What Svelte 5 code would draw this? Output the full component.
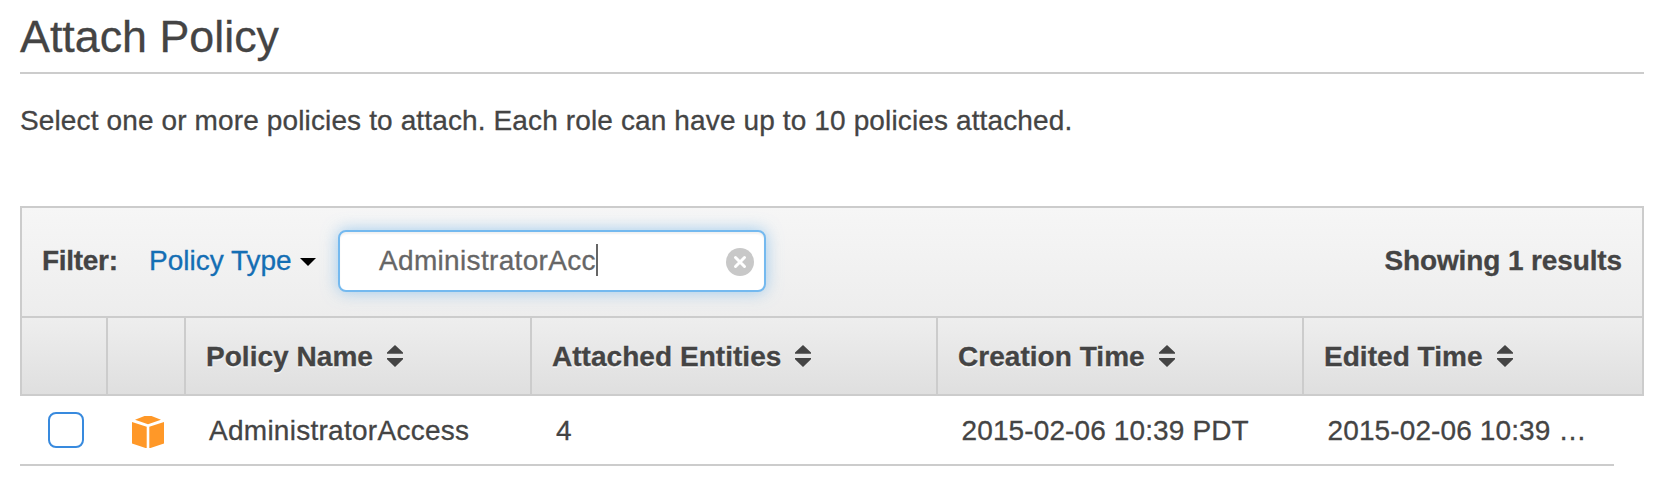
<script>
  const columns = [
    { label: 'Policy Name' },
    { label: 'Attached Entities' },
    { label: 'Creation Time' },
    { label: 'Edited Time' }
  ];
  const policies = [
    { name: 'AdministratorAccess', attached: 4, created: '2015-02-06 10:39 PDT', edited: '2015-02-06 10:39 PDT' }
  ];
  const query = 'AdministratorAcc';
</script>

<main>
  <h1>Attach Policy</h1>
  <p class="intro">Select one or more policies to attach. Each role can have up to 10 policies attached.</p>

  <section class="panel">
    <div class="toolbar">
      <strong class="filter">Filter:</strong>
      <span class="type">Policy Type</span>
      <svg class="caret" width="16" height="8" viewBox="0 0 16 8"><path d="M0 0H16L8 8Z" /></svg>
      <div class="search">
        <span class="query">{query}</span><i class="cursor"></i>
        <svg class="clear" width="28" height="28" viewBox="0 0 28 28">
          <circle cx="14" cy="14" r="14" fill="#c8c8c8" />
          <path d="M9.5 9.5L18.5 18.5M18.5 9.5L9.5 18.5" stroke="#fff" stroke-width="3" stroke-linecap="round" />
        </svg>
      </div>
      <strong class="count">Showing 1 results</strong>
    </div>
    <div class="head grid">
      <div></div>
      <div></div>
      {#each columns as col}
        <div class="th">
          <span>{col.label}</span>
          <svg width="16" height="22" viewBox="0 0 16 22"><path d="M8 0L16 7.5V8.7H0V7.5ZM0 13H16V14.2L8 22L0 14.2Z" fill="#444" /></svg>
        </div>
      {/each}
    </div>
  </section>

  {#each policies as p}
    <div class="row grid">
      <div class="check"><span class="box"></span></div>
      <div class="icon">
        <svg width="32" height="32" viewBox="0 0 32 32" fill="#ff9828">
          <path d="M3 3.8L12.5 0H19.5L29 3.8L16 8.3ZM0 6L14.7 10.7V32H13.5L0 27.5ZM32 6L17.3 10.7V32H18.5L32 27.5Z" />
        </svg>
      </div>
      <div class="td name">{p.name}</div>
      <div class="td">{p.attached}</div>
      <div class="td date">{p.created}</div>
      <div class="td date last">{p.edited}</div>
    </div>
  {/each}
</main>

<style>
  :global(body) { background: #fff; }
  main {
    box-sizing: border-box;
    width: 1666px;
    height: 496px;
    padding: 0 22px 0 20px;
    overflow: hidden;
    font: 28px/32px "Liberation Sans", Arial, sans-serif;
    color: #444;
    white-space: nowrap;
    -webkit-text-stroke: 0.3px currentColor;
  }
  h1 {
    box-sizing: border-box;
    height: 74px;
    margin: 0;
    padding-top: 10px;
    border-bottom: 2px solid #ccc;
    font-size: 44.8px;
    line-height: 52px;
    font-weight: 400;
  }
  .intro { margin: 31px 0 69px; letter-spacing: 0.13px; }
  .panel { border: 2px solid #ccc; }
  .toolbar {
    display: flex;
    align-items: center;
    height: 108px;
    padding: 0 20px 2px 20px;
    box-sizing: border-box;
    background: linear-gradient(#f6f6f6, #ededed);
  }
  .filter { width: 107px; letter-spacing: -0.3px; }
  .type { width: 151px; color: #146eb4; }
  .caret { margin-top: 2px; }
  .search {
    box-sizing: border-box;
    display: flex;
    align-items: center;
    width: 428px;
    height: 62px;
    margin: 0 0 0 22px;
    padding: 0 10px 0 39px;
    background: #fff;
    border: 2px solid #74b9ef;
    border-radius: 8px;
    box-shadow: 0 0 16px rgba(102, 175, 233, .6), inset 0 2px 2px rgba(0, 0, 0, .06);
    color: #666;
  }
  .query { letter-spacing: 0.33px; }
  .cursor { width: 2px; height: 32px; margin-top: -2px; background: #666; }
  .clear { margin-left: auto; margin-top: 2px; }
  .count { margin-left: auto; letter-spacing: -0.12px; }
  .grid { display: grid; grid-template-columns: 86px 78px 346px 406px 366px 1fr; }
  .head {
    height: 78px;
    box-sizing: border-box;
    border-top: 2px solid #ccc;
    background: linear-gradient(#eee, #dfdfdf);
    font-weight: 700;
    text-shadow: 0 2px 0 rgba(255, 255, 255, .6);
  }
  .head > div { border-right: 2px solid #ccc; }
  .head > div:last-child { border-right: 0; }
  .th { display: flex; align-items: center; gap: 14px; padding-left: 20px; letter-spacing: 0.04px; }
  .th span { padding-top: 2px; }
  .row {
    width: 1594px;
    height: 70px;
    box-sizing: border-box;
    border-bottom: 2px solid #ccc;
    padding-left: 2px;
    align-items: center;
  }
  .check { padding-left: 26px; }
  .icon { padding: 4px 0 0 24px; }
  .box { display: block; box-sizing: border-box; width: 36px; height: 36px; border: 2px solid #388ade; border-radius: 8px; }
  .icon svg { display: block; }
  .td { padding: 2px 0 0 24px; overflow: hidden; text-overflow: ellipsis; }
  .name { padding-left: 23px; letter-spacing: 0.27px; }
  .date { padding-left: 23.5px; letter-spacing: 0.12px; }
  .last { padding-right: 26px; }
</style>
